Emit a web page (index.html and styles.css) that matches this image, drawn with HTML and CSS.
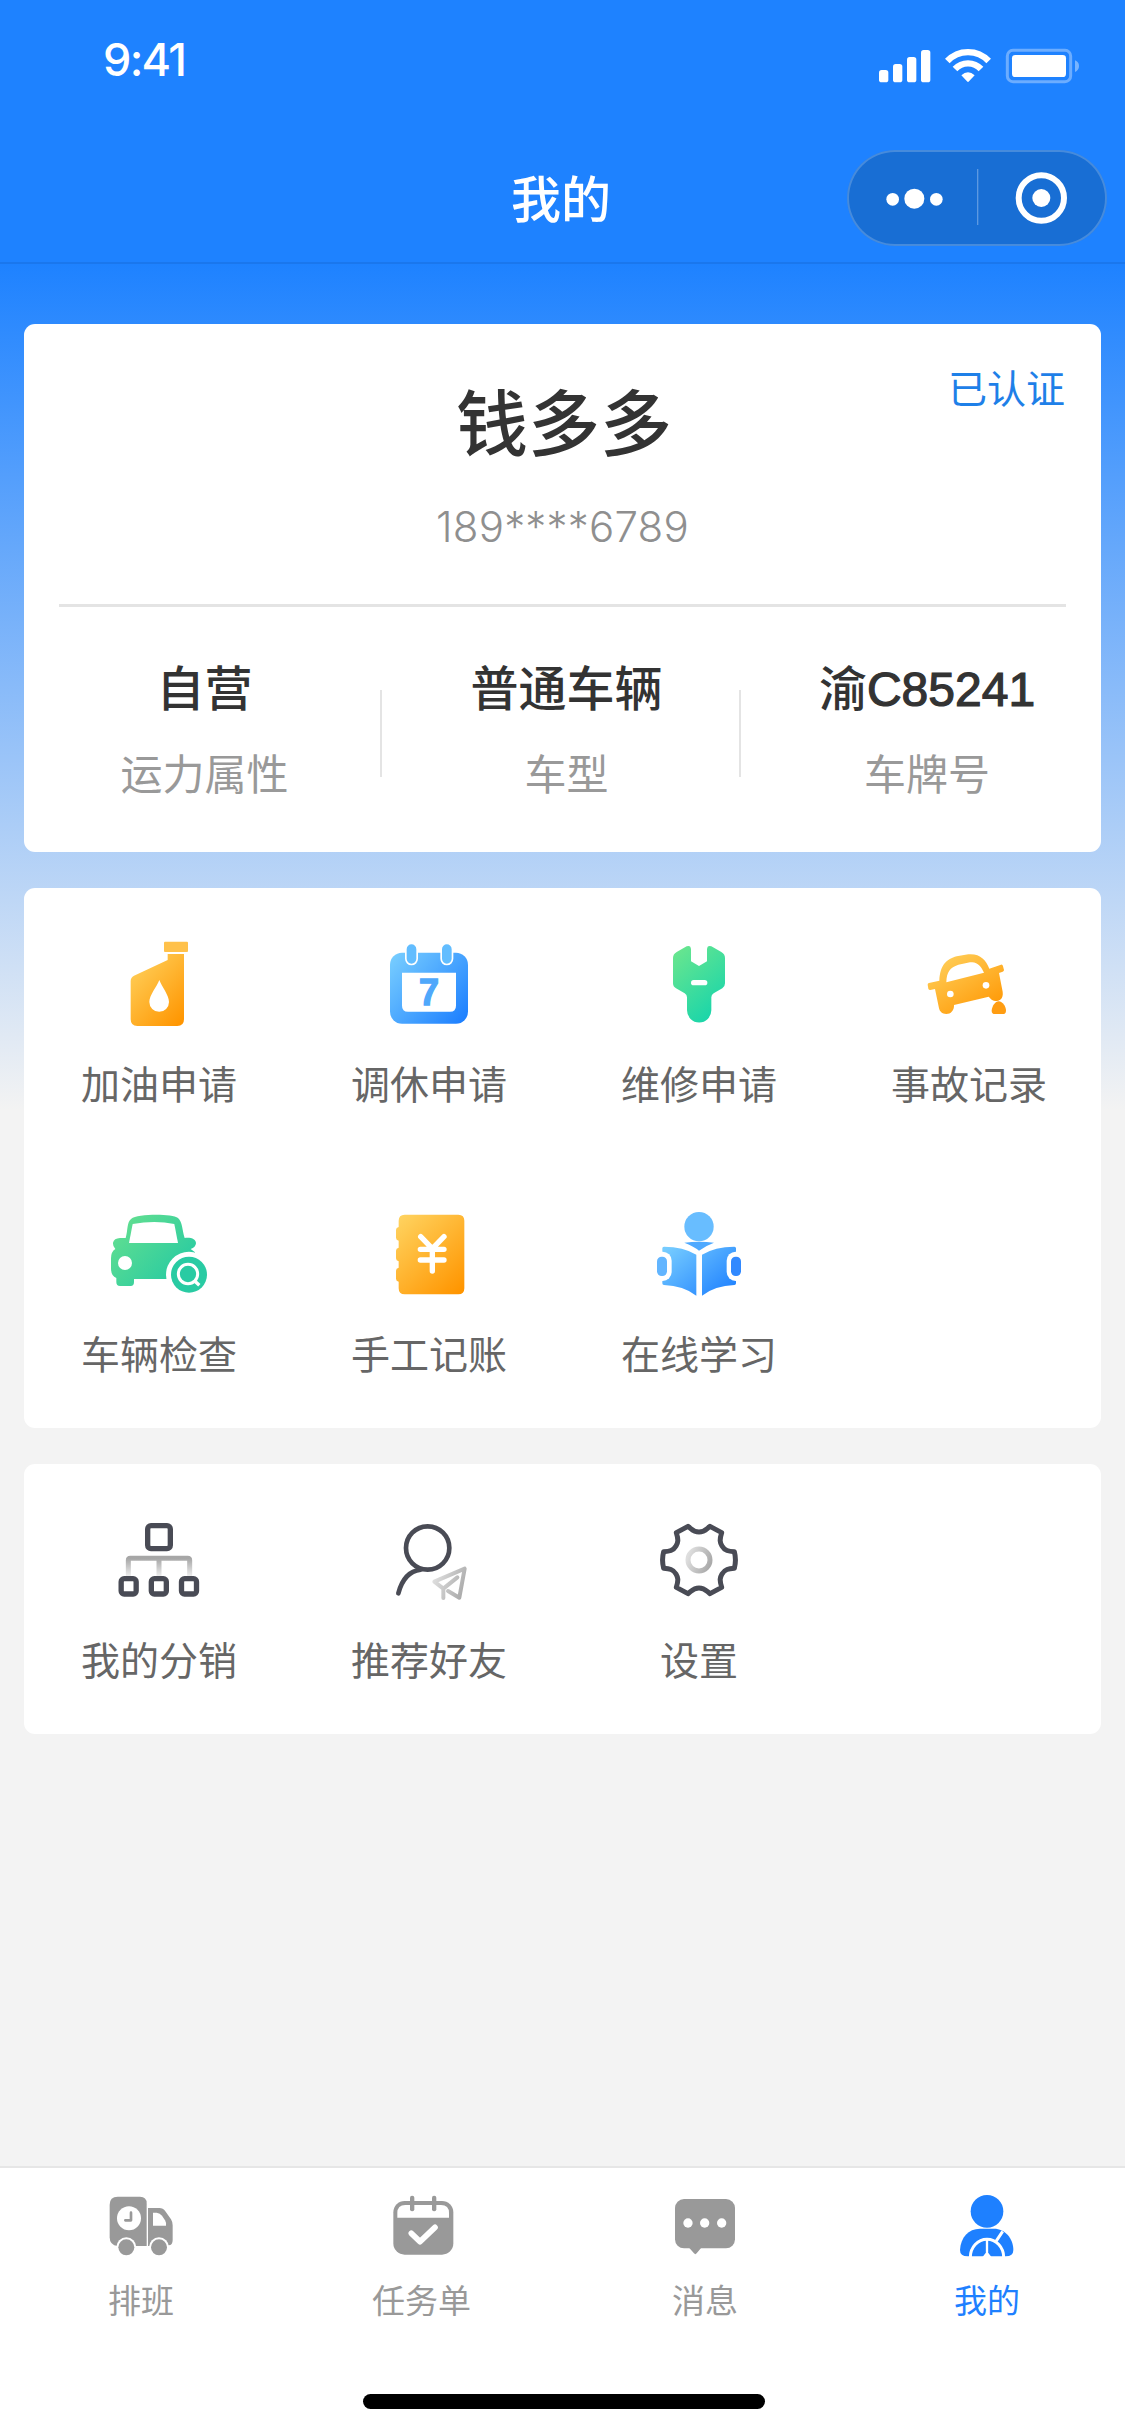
FILE: index.html
```html
<!DOCTYPE html>
<html lang="zh-CN">
<head>
<meta charset="utf-8">
<title>我的</title>
<link rel="stylesheet" href="styles.css">
</head>
<body>
<svg class="defs" width="0" height="0" aria-hidden="true">
  <defs>
    <linearGradient id="orange" x1="0.1" y1="0" x2="0.9" y2="1"><stop offset="0" stop-color="#ffd25e"/><stop offset="1" stop-color="#ff9500"/></linearGradient>
    <linearGradient id="blue" x1="0" y1="0.1" x2="1" y2="0.9"><stop offset="0" stop-color="#76ccff"/><stop offset="1" stop-color="#1e80ff"/></linearGradient>
    <linearGradient id="green" x1="0.2" y1="0" x2="0.8" y2="1"><stop offset="0" stop-color="#67e58f"/><stop offset="1" stop-color="#14d4ac"/></linearGradient>
    <linearGradient id="teal" x1="0" y1="0.1" x2="1" y2="0.9"><stop offset="0" stop-color="#66e08f"/><stop offset="1" stop-color="#20c8a4"/></linearGradient>
    <linearGradient id="fade" x1="0" y1="0" x2="0" y2="1"><stop offset="0" stop-color="#a6a6a6"/><stop offset="1" stop-color="#ededed"/></linearGradient>
    <linearGradient id="silver" x1="0" y1="0.3" x2="1" y2="0.7"><stop offset="0" stop-color="#dedede"/><stop offset="1" stop-color="#ababab"/></linearGradient>
  </defs>
</svg>
<div class="screen">
  <header class="header">
    <div class="status">
      <span class="time">9:41</span>
      <svg class="status-icons" viewBox="105 78 618 117">
        <g fill="#fff">
          <rect x="117" y="150" width="28" height="37" rx="8"/><rect x="159" y="132" width="28" height="55" rx="8"/><rect x="201" y="111" width="28" height="76" rx="8"/><rect x="243" y="90" width="28" height="97" rx="8"/>
          <path d="M364 166Q384 147 404 166L387 184Q384 188 381 184Z"/>
          <rect x="516" y="105" width="162" height="66" rx="10"/>
        </g>
        <path d="M322 123A85 85 0 0 1 446 123M345 147A53 53 0 0 1 423 147" fill="none" stroke="#fff" stroke-width="19"/>
        <rect x="502" y="91" width="190" height="94" rx="17" fill="none" stroke="#fff" stroke-opacity=".35" stroke-width="9"/>
        <path d="M705 121Q717 126 717 138T705 156Z" fill="#fff" opacity=".4"/>
      </svg>
    </div>
    <div class="nav">
      <h1>我的</h1>
      <div class="capsule">
        <svg viewBox="20 390 780 288">
          <g fill="#fff"><circle cx="157" cy="538" r="19"/><circle cx="222" cy="536" r="30"/><circle cx="288" cy="538" r="19"/><circle cx="603" cy="534" r="27"/></g>
          <path d="M412 447V615" stroke="#fff" stroke-opacity=".3" stroke-width="4"/>
          <circle cx="603" cy="534" r="68" fill="none" stroke="#fff" stroke-width="18"/>
        </svg>
      </div>
    </div>
  </header>

  <main class="content">
    <section class="card profile">
      <span class="verified">已认证</span>
      <h2 class="name">钱多多</h2>
      <p class="phone">189****6789</p>
      <div class="stats">
        <div class="stat first"><strong>自营</strong><span>运力属性</span></div>
        <i class="divider"></i>
        <div class="stat"><strong>普通车辆</strong><span>车型</span></div>
        <i class="divider"></i>
        <div class="stat"><strong>渝<b class="plate">C85241</b></strong><span>车牌号</span></div>
      </div>
    </section>

    <section class="card grid">
      <a class="item">
        <svg viewBox="135 90 324 324"><g fill="url(#orange)"><path d="M323 162H372V358Q372 378 352 378H232Q212 378 212 358V243Q212 232 222 227L323 180Z"/></g><rect x="312" y="125" width="72" height="31" rx="3" fill="#ffc14a"/><path d="M298 240C305 260 327 285 327 306A29.500 29.500 0 0 1 268 306C268 285 291 260 298 240Z" fill="#fff"/></svg>
        <span>加油申请</span>
      </a>
      <a class="item">
        <svg viewBox="945 90 324 324"><rect x="990" y="158" width="234" height="213" rx="36" fill="url(#blue)"/><g fill="#62bdff" stroke="#fff" stroke-width="5"><rect x="1037.500" y="130.500" width="34" height="63" rx="17"/><rect x="1143.500" y="130.500" width="34" height="63" rx="17"/></g><path d="M1026 218H1188V317Q1188 335 1170 335H1044Q1026 335 1026 317Z" fill="#fff"/><text class="day" x="1107" y="316" text-anchor="middle">7</text></svg>
        <span>调休申请</span>
      </a>
      <a class="item">
        <svg viewBox="195 90 324 324"><path d="M320 139Q332 134 333 148V184L357 198L381 184V148Q382 134 394 139L424 156Q435 162 435 174V250Q435 260 427 265L401 280Q394 284 394 292V331A36.500 36.500 0 0 1 321 331V292Q321 284 314 280L288 265Q279 260 279 250V174Q279 162 290 156Z" fill="url(#green)"/><rect x="333" y="240" width="49" height="16" rx="8" fill="#fff"/></svg>
        <span>维修申请</span>
      </a>
      <a class="item">
        <svg viewBox="1005 90 324 324"><path d="M1043 254Q1043 250 1047 249L1078 242C1080 195 1100 177 1130 169L1165 163C1200 160 1218 180 1228 206L1263 194Q1268 193 1269 199L1272 210Q1272 214 1268 215L1257 219L1268 275C1271 297 1258 303 1246 303C1234 302 1229 292 1226 290L1122 315C1123 332 1112 342 1099 342C1086 342 1079 334 1077 325L1065 267L1051 270Q1046 270 1045 266ZM1099 247L1212 218C1204 200 1192 183 1170 187L1135 194C1110 203 1100 215 1099 247Z" fill="url(#orange)" fill-rule="evenodd"/><circle cx="1111" cy="282" r="10" fill="#fff"/><circle cx="1218" cy="256" r="10" fill="#fff"/><path d="M1256 304C1268 304 1278 320 1278 332Q1278 342 1268 342H1245Q1235 342 1235 332C1236 318 1246 304 1256 304Z" fill="#ff9d12"/></svg>
        <span>事故记录</span>
      </a>
      <a class="item">
        <svg viewBox="15 0 324 324"><path d="M77 114C84 90 80 66 94 56C110 42 215 40 234 54C248 66 246 90 254 114C275 112 288 118 288 130Q287 142 272 147L285 157V237H102V246Q102 258 92 258H60Q49 258 49 246V234Q33 228 33 205V175Q33 155 46 147Q38 138 39 128Q42 115 60 114Z" fill="url(#teal)"/><path d="M98 72Q165 60 223 72L234 129H87Z" fill="#fff"/><circle cx="75" cy="189" r="21" fill="#fff"/><circle cx="267" cy="224" r="69" fill="#fff"/><circle cx="267" cy="224" r="54" fill="#29cba3"/><circle cx="264" cy="222" r="29" fill="none" stroke="#fff" stroke-width="9"/><path d="M284 243L298 256" stroke="#fff" stroke-width="10"/></svg>
        <span>车辆检查</span>
      </a>
      <a class="item">
        <svg viewBox="825 0 324 324"><path d="M914 44H1075Q1093 44 1093 62V265Q1093 283 1075 283H914Q896 283 896 265V245Q888 243 888 236V212Q888 205 896 203V184Q888 182 888 175V152Q888 145 896 143V122Q888 120 888 113V90Q888 83 896 81V62Q896 44 914 44Z" fill="url(#orange)"/><path d="M962 110L997 146L1032 110M961 148H1032M961 180H1032M997 146V213" fill="none" stroke="#fff" stroke-width="16" stroke-linecap="round"/></svg>
        <span>手工记账</span>
      </a>
      <a class="item">
        <svg viewBox="15 0 324 324"><circle cx="177" cy="80" r="44" fill="#68bdff"/><path d="M133 128Q178 123 222 128Q195 138 177 152Q160 138 133 128Z" fill="#4ea9ff"/><path d="M67 145Q67 140 72 140Q130 140 169 164V287Q130 257 72 255Q67 255 67 250ZM288 145Q288 140 283 140Q225 140 186 164V287Q225 257 283 255Q288 255 288 250Z" fill="url(#blue)"/><g fill="#fff"><rect x="38" y="155" width="57" height="88" rx="27"/><rect x="260" y="155" width="57" height="88" rx="27"/></g><rect x="51" y="170" width="30" height="58" rx="14" fill="#62b5ff"/><rect x="273" y="170" width="30" height="58" rx="14" fill="#3189ff"/></svg>
        <span>在线学习</span>
      </a>
    </section>

    <section class="card grid">
      <a class="item">
        <svg viewBox="0 0 324 324" fill="none"><path d="M70 210V163Q70 157 76 157H248Q254 157 254 163V210M162 157V210" stroke="url(#fade)" stroke-width="15"/><g stroke="#494b55" stroke-width="16"><rect x="128" y="59" width="68" height="69" rx="10"/><rect x="48.500" y="218" width="45" height="46" rx="9"/><rect x="139" y="218" width="45" height="46" rx="9"/><rect x="229.500" y="218" width="45" height="46" rx="9"/></g></svg>
        <span>我的分销</span>
      </a>
      <a class="item">
        <svg viewBox="-15 -12 324 324" fill="none" stroke-linecap="round" stroke-linejoin="round"><circle cx="143" cy="114" r="65" stroke="#494b55" stroke-width="14"/><path d="M122 179Q72 185 55 250" stroke="#494b55" stroke-width="14"/><path d="M190 264V236L163 215L254 176L238 263L204 243M190 236L232 202" stroke="url(#silver)" stroke-width="12"/></svg>
        <span>推荐好友</span>
      </a>
      <a class="item">
        <svg viewBox="795 -12 324 324" fill="none"><path d="M924 49C935 57 940 66 957 66C974 66 979 57 990 49L1025 68C1018 90 1020 98 1026 108C1034 122 1046 124 1063 125C1067 140 1067 160 1063 175C1046 176 1034 178 1026 192C1020 202 1018 210 1025 232L990 251C979 243 974 234 957 234C940 234 935 243 924 251L889 232C896 210 894 202 888 192C880 178 868 176 851 175C847 160 847 140 851 125C868 124 880 122 888 108C894 98 896 90 889 68Z" stroke="#494b55" stroke-width="15" stroke-linejoin="round"/><circle cx="957" cy="150" r="33" stroke="url(#silver)" stroke-width="15"/></svg>
        <span>设置</span>
      </a>
    </section>
  </main>

  <nav class="tabbar">
    <div class="tabs">
      <a class="tab">
        <svg viewBox="135 117 216 216"><g fill="#999"><path d="M173 140H240Q260 140 260 160V288H173Q149 286 149 262V164Q149 140 173 140Z"/><path d="M264 174H298Q309 174 316 184L333 208Q338 216 338 226V270Q338 286 326 286L264 288Z"/></g><g fill="#fff"><path d="M279 188H290Q300 189 306 197L315 211Q320 220 318 227H279Z"/><circle cx="207" cy="205" r="36"/><circle cx="199" cy="292" r="30"/><circle cx="297" cy="292" r="30"/></g><g fill="#999"><circle cx="199" cy="292" r="24"/><circle cx="297" cy="292" r="24"/></g><path d="M213 188V211H196" fill="none" stroke="#999" stroke-width="8" stroke-linecap="round" stroke-linejoin="round"/></svg>
        <span>排班</span>
      </a>
      <a class="tab">
        <svg viewBox="981 117 216 216"><rect x="1000" y="153" width="180" height="161" rx="34" fill="#999"/><path d="M1012 203V189Q1012 165 1036 165H1143Q1167 165 1167 189V203Z" fill="#fff"/><g fill="#999"><rect x="1050" y="137" width="13" height="47" rx="6"/><rect x="1116" y="137" width="13" height="47" rx="6"/></g><path d="M1054 250L1080 275L1125 232" fill="none" stroke="#fff" stroke-width="17" stroke-linecap="round" stroke-linejoin="round"/></svg>
        <span class="wide">任务单</span>
      </a>
      <a class="tab">
        <svg viewBox="207 117 216 216"><g fill="#999"><rect x="225" y="147" width="180" height="148" rx="27"/><path d="M266 292L282 310Q286 315 290 310L305 292Z"/></g><g fill="#fff"><circle cx="264" cy="219" r="14"/><circle cx="314" cy="219" r="14"/><circle cx="365" cy="219" r="14"/></g></svg>
        <span>消息</span>
      </a>
      <a class="tab active">
        <svg viewBox="1053 117 216 216"><g fill="#1e80ff"><circle cx="1161" cy="184" r="49"/><path d="M1080 300C1082 262 1105 236 1140 236H1182C1215 236 1240 265 1240 300Q1240 319 1217 319H1103Q1080 319 1080 300Z"/></g><path d="M1111 322A50 54 0 0 1 1211 322M1208 244L1188 274" fill="none" stroke="#fff" stroke-width="9"/><path d="M1161 268V319" stroke="#fff" stroke-width="7"/><path d="M1147 322L1157 309H1165L1175 322Z" fill="#fff"/></svg>
        <span>我的</span>
      </a>
    </div>
    <div class="home-indicator"></div>
  </nav>
</div>
</body>
</html>
```

FILE: styles.css
```css
* { box-sizing: border-box; }
body {
  margin: 0;
  font-family: "Noto Sans CJK SC", "Noto Sans", sans-serif;
  color: #333;
}
h1, h2, p { margin: 0; }
svg { display: block; }
.defs { position: absolute; }

.screen {
  width: 1125px;
  height: 2436px;
  display: flex;
  flex-direction: column;
  overflow: hidden;
  background: linear-gradient(180deg, #1e82ff 264px, #f3f3f3 1110px);
}

/* Header */
.header {
  height: 264px;
  background: #1e82ff;
  border-bottom: 2px solid #1a77ed;
  color: #fff;
}
.status {
  height: 132px;
  padding: 46px 44px 0 103px;
  display: flex;
  justify-content: space-between;
  align-items: flex-start;
}
.time {
  margin-top: -2px;
  font: 500 45px/32px Inter, sans-serif;
  letter-spacing: -1.7px;
}
.status-icons { width: 206px; height: 39px; }
.nav {
  height: 132px;
  padding: 18px 18px 0;
  display: grid;
  grid-template-columns: 260px 1fr 260px;
}
.nav h1 {
  grid-column: 2;
  padding: 2px 3px 0 0;
  text-align: center;
  font-size: 50px;
  line-height: 88px;
  font-weight: 500;
}
.capsule {
  height: 96px;
  border-radius: 48px;
  background: #186ed4;
  box-shadow: inset 0 0 0 2px rgba(255, 255, 255, .2);
}
.capsule svg { width: 260px; height: 96px; }

/* Cards */
.content {
  flex: 1;
  padding: 60px 24px 0;
  display: flex;
  flex-direction: column;
  gap: 36px;
}
.card {
  background: #fff;
  border-radius: 11px;
}
.profile {
  height: 528px;
  position: relative;
}
.verified {
  position: absolute;
  top: 32px;
  right: 36px;
  font-size: 39px;
  line-height: 60px;
  color: #1e80e8;
}
.name {
  padding: 47px 0 0 3px;
  text-align: center;
  font-size: 72px;
  line-height: 96px;
  font-weight: 500;
}
.phone {
  margin: 0 35px;
  height: 140px;
  padding-top: 33px;
  text-align: center;
  font: 300 42px/54px Inter, sans-serif;
  letter-spacing: .2px;
  color: #8f8f8f;
  border-bottom: 3px solid #e4e4e4;
}
.stats {
  display: grid;
  grid-template-columns: 356px 2px 357px 2px 1fr;
}
.divider {
  height: 87px;
  margin-top: 83px;
  background: #e4e4e4;
}
.stat {
  padding: 46px 0 0 12px;
  display: flex;
  flex-direction: column;
  align-items: center;
  white-space: nowrap;
}
.stat.first { padding-left: 5px; }
.stat strong {
  height: 64px;
  font-size: 48px;
  line-height: 64px;
  font-weight: 500;
}
.stat span {
  margin-top: 23px;
  font-size: 42px;
  line-height: 64px;
  color: #999;
}
.plate {
  font-family: "Liberation Sans", sans-serif;
  font-size: 48px;
  line-height: 1;
  font-weight: 400;
  -webkit-text-stroke: 1.2px #333;
}

.grid {
  display: grid;
  grid-template-columns: repeat(4, 270px);
  grid-auto-rows: 270px;
}
.item {
  padding-top: 42px;
  display: flex;
  flex-direction: column;
  align-items: center;
}
.item svg { width: 108px; height: 108px; }
.item span {
  margin-top: 14px;
  font-size: 39px;
  line-height: 60px;
  color: #666;
}
.day {
  font: 700 108px "Liberation Sans", sans-serif;
  fill: #4fa8fb;
  stroke: #4fa8fb;
  stroke-width: 4px;
}

/* Tab bar */
.tabbar {
  height: 270px;
  background: #fff;
  border-top: 2px solid #e6e6e6;
}
.tabs {
  display: grid;
  grid-template-columns: repeat(4, 282px);
}
.tab {
  padding-top: 21px;
  display: flex;
  flex-direction: column;
  align-items: center;
  color: #999;
}
.tab svg { width: 72px; height: 72px; }
.tab span {
  margin-top: 14px;
  font-size: 33px;
  line-height: 48px;
}
.tab .wide { margin-right: 3px; }
.tab.active { color: #1e80ff; }
.home-indicator {
  width: 402px;
  height: 15px;
  margin: 71px 0 0 363px;
  border-radius: 8px;
  background: #000;
}
```
